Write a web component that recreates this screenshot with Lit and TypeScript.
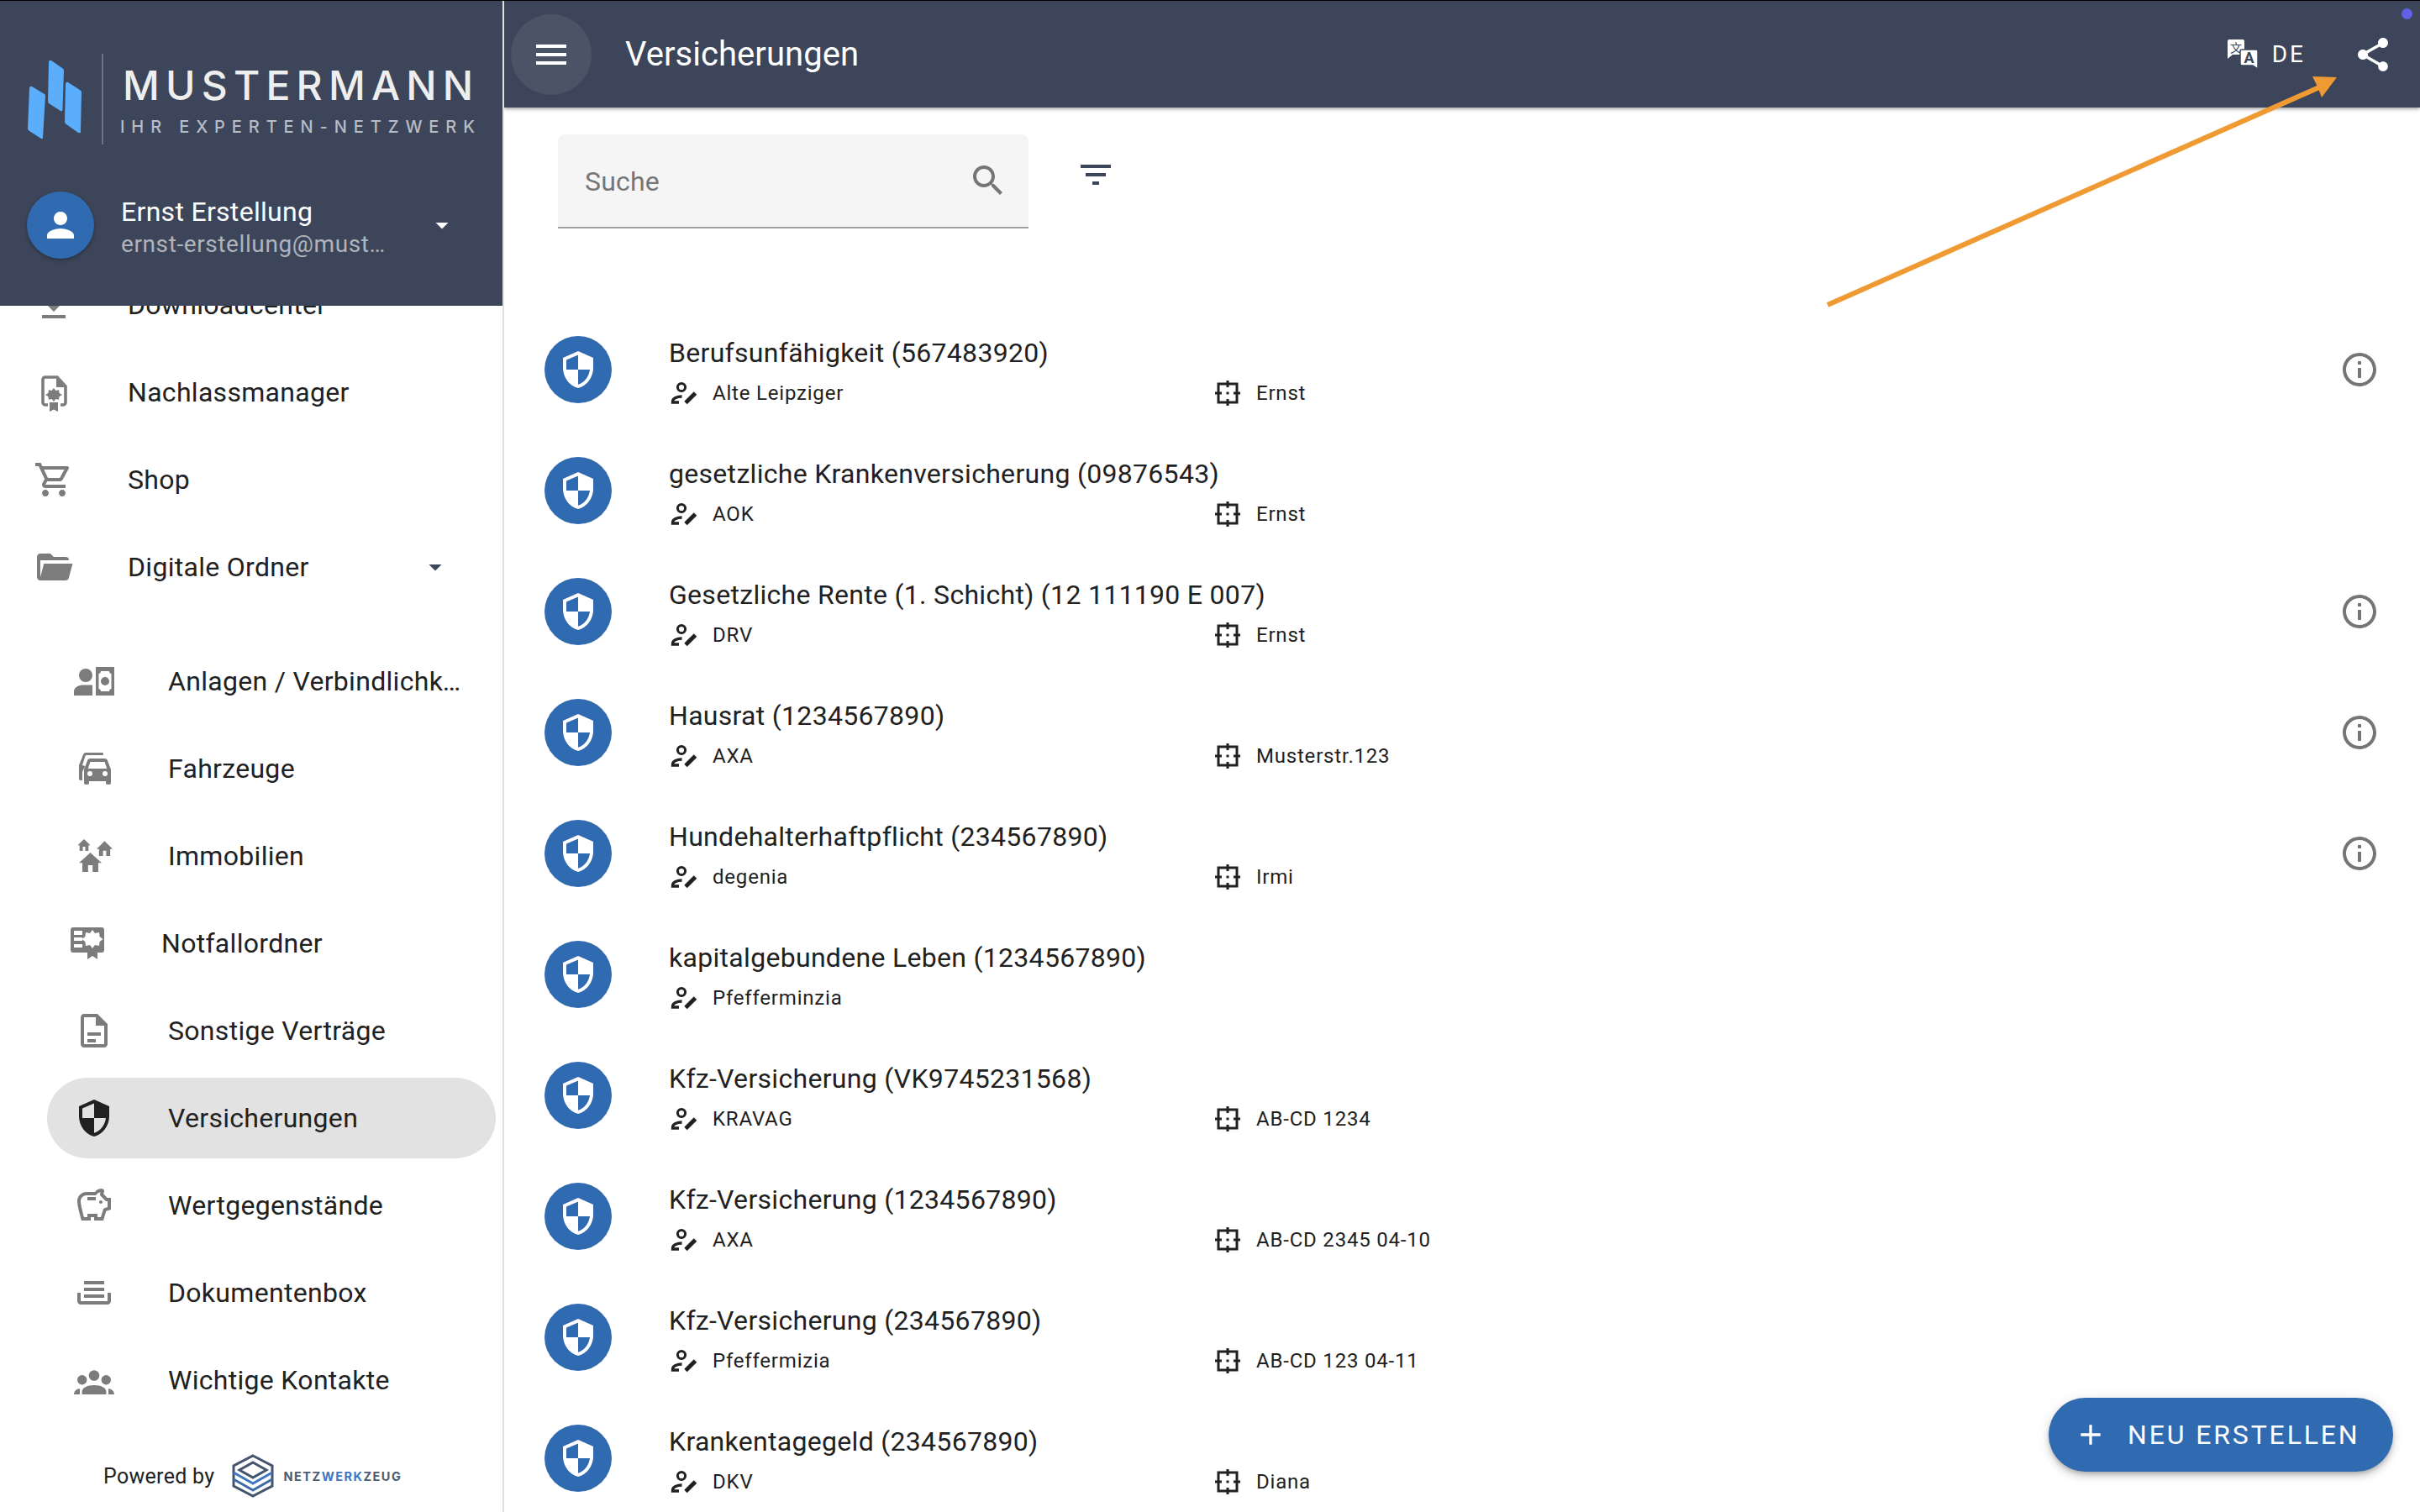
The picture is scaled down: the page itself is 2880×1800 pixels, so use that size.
import { LitElement, html, css, svg } from "lit";
import { customElement } from "lit/decorators.js";

const P = {
  download: "M19 9h-4V3H9v6H5l7 7 7-7zM5 18v2h14v-2H5z",
  cart: "M15.55 13c.75 0 1.41-.41 1.75-1.03l3.58-6.49c.37-.66-.11-1.48-.87-1.48H5.21l-.94-2H1v2h2l3.6 7.59-1.35 2.44C4.52 15.37 5.48 17 7 17h12v-2H7l1.1-2h7.45zM6.16 6h12.15l-2.76 5H8.53L6.16 6zM7 18c-1.1 0-1.99.9-1.99 2S5.9 22 7 22s2-.9 2-2-.9-2-2-2zm10 0c-1.1 0-1.99.9-1.99 2s.89 2 1.99 2 2-.9 2-2-.9-2-2-2z",
  folder: "M19 20H4C2.89 20 2 19.1 2 18V6C2 4.89 2.89 4 4 4H10L12 6H19A2 2 0 0 1 21 8H4V18L6.14 10H23.21L20.93 18.5C20.7 19.37 19.92 20 19 20Z",
  shield: "M12 1L3 5v6c0 5.55 3.84 10.74 9 12 5.16-1.26 9-6.45 9-12V5l-9-4zm0 10.99h7c-.53 4.12-3.28 7.79-7 8.94V12H5V6.3l7-3.11v8.8z",
  piggy: "M15 10c0-.55.45-1 1-1s1 .45 1 1-.45 1-1 1-1-.45-1-1zM8 9h5V7H8v2zm14-1.5v6.97l-2.82.94L17.5 21H12v-2h-2v2H4.5S2 12.54 2 9.5 4.46 4 7.5 4h5c.91-1.21 2.36-2 4-2 .83 0 1.5.67 1.5 1.5 0 .21-.04.4-.12.58-.14.32-.26.65-.31.99L19.83 7.5H22zm-2 2h-1l-3.5-3.5c0-.65.09-1.29.26-1.91C14.79 4.34 14 4.8 13.5 5.5L13 6H7.5C5.57 6 4 7.57 4 9.5c0 1.88 1.22 6.65 2.01 9.5H8v-2h6v2h2.01l1.55-5.15 2.44-.82V9.5z",
  box: "M6 5h12v2H6zM6 9h12v2H6zM6 13h12v2H6zM2 12h2v5h16v-5h2v5c0 1.1-.9 2-2 2H4c-1.1 0-2-.9-2-2z",
  doc: "M14 2H6c-1.1 0-2 .9-2 2v16c0 1.1.9 2 2 2h12c1.1 0 2-.9 2-2V8l-6-6zM18 20H6V4h7v5h5zM8 13h8v2H8zM8 17h5v2H8z",
  car: "M19.9 7c-.2-.6-.8-1-1.4-1h-9c-.6 0-1.2.4-1.4 1L6 12.5v8a1 1 0 001 1h1a1 1 0 001-1v-1h10v1a1 1 0 001 1h1a1 1 0 001-1v-8zM8.4 12l1.3-4h8.6l1.3 4zM9.5 16.5a1.5 1.5 0 110-3 1.5 1.5 0 010 3zm9 0a1.5 1.5 0 110-3 1.5 1.5 0 010 3zM16.5 2.5H7c-.6 0-1.2.4-1.4 1L3 10v8a1 1 0 001 1h1v-5l1.6-3.5-1.6-.5 1.8-5.5c.1-.4.4-.5.8-.5h9.9c-.1-.5-.2-1-.2-1.5z",
  person: "M12 12c2.21 0 4-1.79 4-4s-1.79-4-4-4-4 1.79-4 4 1.79 4 4 4zm0 2c-2.67 0-8 1.34-8 4v2h16v-2c0-2.66-5.33-4-8-4z",
  menu: "M3 18h18v-2H3v2zm0-5h18v-2H3v2zm0-7v2h18V6H3z",
  filter: "M10 18h4v-2h-4v2zM3 6v2h18V6H3zm3 7h12v-2H6v2z",
  search: "M15.5 14h-.79l-.28-.27C15.41 12.59 16 11.11 16 9.5 16 5.91 13.09 3 9.5 3S3 5.91 3 9.5 5.91 16 9.5 16c1.61 0 3.09-.59 4.23-1.57l.27.28v.79l5 4.99L20.49 19l-4.99-5zm-6 0C7.01 14 5 11.99 5 9.5S7.01 5 9.5 5 14 7.01 14 9.5 11.99 14 9.5 14z",
  share: "M18 16.08c-.76 0-1.44.3-1.96.77L8.91 12.7c.05-.23.09-.46.09-.7s-.04-.47-.09-.7l7.05-4.11c.54.5 1.25.81 2.04.81 1.66 0 3-1.34 3-3s-1.34-3-3-3-3 1.34-3 3c0 .24.04.47.09.7L8.04 9.81C7.5 9.31 6.79 9 6 9c-1.66 0-3 1.34-3 3s1.34 3 3 3c.79 0 1.5-.31 2.04-.81l7.12 4.16c-.05.21-.08.43-.08.65 0 1.61 1.31 2.92 2.92 2.92 1.61 0 2.92-1.31 2.92-2.92s-1.31-2.92-2.92-2.92z",
  info: "M11 7h2v2h-2zm0 4h2v6h-2zm1-9C6.48 2 2 6.48 2 12s4.48 10 10 10 10-4.48 10-10S17.52 2 12 2zm0 18c-4.41 0-8-3.59-8-8s3.59-8 8-8 8 3.59 8 8-3.59 8-8 8z",
  plus: "M19 13h-6v6h-2v-6H5v-2h6V5h2v6h6v2z",
  caret: "M7 10l5 5 5-5z",
};
const HOME = "M10 20v-6h4v6h5v-8h3L12 3 2 12h3v8z";

const ic = (d: string, cls = "") => html`<svg class="ic ${cls}" viewBox="0 0 24 24"><path d=${d} fill-rule="evenodd"></path></svg>`;

const certIcon = html`<svg class="ic" viewBox="0 0 48 48">
  <path d="M17 39h-3a3 3 0 0 1-3-3V9a3 3 0 0 1 3-3h14l10 11v19a3 3 0 0 1-3 3h-3" fill="none" stroke="currentColor" stroke-width="3.6"></path>
  <path d="M27 6l11 12H27z"></path>
  <path d="M24 19l2.4 3 3.6-.8.6 3.8 3.4 2-3.4 2-.6 3.8-3.6-.8-2.4 3-2.4-3-3.6.8-.6-3.8-3.4-2 3.4-2 .6-3.8 3.6.8z"></path>
  <path d="M19 36h10v11l-5-2.5-5 2.5z"></path>
</svg>`;
const assetsIcon = html`<svg class="ic" viewBox="0 0 48 48">
  <circle cx="14" cy="17" r="8"></circle>
  <path d="M0 41v-5c0-5 6-7.500 11-7.500h11V41z"></path>
  <path fill-rule="evenodd" d="M26 7h22v34H26zM32 12c0 2-1.500 3-2.500 3v18c1 0 2.500 1 2.500 3h10c0-2 1.500-3 2.500-3V15c-1 0-2.500-1-2.500-3zM37 19a5 5 0 1 1 0 10 5 5 0 0 1 0-10z"></path>
</svg>`;
const homesIcon = html`<svg class="ic" viewBox="0 0 48 48">
  <path d=${HOME} transform="translate(3 1.500) scale(.75 .82)"></path>
  <path d=${HOME} transform="translate(25.100 3.100) scale(.95 1.050)"></path>
  <path d=${HOME} transform="translate(3.300 16) scale(1.350)"></path>
</svg>`;
const emergencyIcon = html`<svg class="ic" viewBox="0 0 48 48">
  <path fill-rule="evenodd" d="M7 5h34a3 3 0 0 1 3 3v24a3 3 0 0 1-3 3H7a3 3 0 0 1-3-3V8a3 3 0 0 1 3-3zM8 9v5h10V9zM8 17v4h10v-4zM8 25v4h10v-4z"></path>
  <path fill="#fff" d="M30 8l3 4 5-1 .6 5 4 3-4 3-.6 5-5-1-3 4-3-4-5 1-.6-5-4-3 4-3 .6-5 5 1z"></path>
  <path d="M24 30l6 2 6-2v13l-6-4-6 4z"></path>
</svg>`;
const groupIcon = html`<svg class="ic" viewBox="0 0 48 48">
  <circle cx="24" cy="18.500" r="6.300"></circle>
  <circle cx="9.700" cy="23.700" r="5.700"></circle>
  <circle cx="38.300" cy="23.700" r="5.700"></circle>
  <path d="M9.600 41v-3c0-5 6-8 14.400-8s14.400 3 14.400 8v3z"></path>
  <path d="M0 41c0-3 2-6 7-7v7zM48 41c0-3-2-6-7-7v7z"></path>
</svg>`;

const NAV_TOP = [
  { icon: ic(P.download), label: "Downloadcenter" },
  { icon: certIcon, label: "Nachlassmanager" },
  { icon: ic(P.cart), label: "Shop" },
  { icon: ic(P.folder), label: "Digitale Ordner", caret: true },
];
const NAV_SUB = [
  { icon: assetsIcon, label: "Anlagen / Verbindlichkeiten" },
  { icon: ic(P.car), label: "Fahrzeuge" },
  { icon: homesIcon, label: "Immobilien" },
  { icon: emergencyIcon, label: "Notfallordner", shift: true },
  { icon: ic(P.doc), label: "Sonstige Verträge" },
  { icon: ic(P.shield), label: "Versicherungen", active: true },
  { icon: ic(P.piggy), label: "Wertgegenstände" },
  { icon: ic(P.box), label: "Dokumentenbox" },
  { icon: groupIcon, label: "Wichtige Kontakte" },
];
const ROWS: { t: string; a: string; b?: string; info?: boolean }[] = [
  { t: "Berufsunfähigkeit (567483920)", a: "Alte Leipziger", b: "Ernst", info: true },
  { t: "gesetzliche Krankenversicherung (09876543)", a: "AOK", b: "Ernst" },
  { t: "Gesetzliche Rente (1. Schicht) (12 111190 E 007)", a: "DRV", b: "Ernst", info: true },
  { t: "Hausrat (1234567890)", a: "AXA", b: "Musterstr.123", info: true },
  { t: "Hundehalterhaftpflicht (234567890)", a: "degenia", b: "Irmi", info: true },
  { t: "kapitalgebundene Leben (1234567890)", a: "Pfefferminzia" },
  { t: "Kfz-Versicherung (VK9745231568)", a: "KRAVAG", b: "AB-CD 1234" },
  { t: "Kfz-Versicherung (1234567890)", a: "AXA", b: "AB-CD 2345 04-10" },
  { t: "Kfz-Versicherung (234567890)", a: "Pfeffermizia", b: "AB-CD 123 04-11" },
  { t: "Krankentagegeld (234567890)", a: "DKV", b: "Diana" },
];

@customElement("app-root")
export class AppRoot extends LitElement {
  static styles = css`
    :host { display: block; width: 2880px; height: 1800px; overflow: hidden; font-family: Roboto, "Liberation Sans", sans-serif; color: #212121; background: #fff; position: relative; }
    .app { display: flex; width: 2880px; height: 1800px; box-sizing: border-box; border-top: 1px solid #000; }
    .ic { width: 48px; height: 48px; fill: currentColor; flex: none; display: block; }
    .ic.small { width: 36px; height: 36px; }

    .side { width: 600px; flex: none; box-sizing: border-box; border-right: 2px solid #e0e0e0; display: flex; flex-direction: column; overflow: hidden; }
    .brandbox { height: 363px; flex: none; background: #3c4559; color: #fff; box-sizing: border-box; padding: 63px 0 0 32px; position: relative; z-index: 2; }
    .brand { display: flex; height: 108px; }
    .bars { width: 66px; height: 96px; flex: none; margin-top: 8px; fill: #5aaefc; }
    .rule { width: 2px; height: 108px; background: #6f7585; margin: 0 23px 0 23px; flex: none; }
    .brandtext { display: flex; flex-direction: column; }
    .bname { font-family: Inter, sans-serif; font-weight: 500; font-size: 48px; line-height: 50px; letter-spacing: 7.2px; color: #eeeeee; margin-top: 13px; white-space: nowrap; }
    .bsub { font-family: Inter, sans-serif; font-weight: 500; font-size: 20px; line-height: 24px; letter-spacing: 7.900px; color: #b9bcc4; margin-top: 12px; margin-left: -3px; white-space: nowrap; }
    .account { display: flex; align-items: center; margin-top: 56px; height: 80px; }
    .avatar { width: 80px; height: 80px; border-radius: 50%; background: #306ab0; display: flex; align-items: center; justify-content: center; box-shadow: 0 2px 4px rgba(0,0,0,.3); flex: none; }
    .who { margin: 6px 0 0 32px; width: 316px; flex: none; }
    .who div { overflow: hidden; white-space: nowrap; text-overflow: ellipsis; }
    .uname { font-size: 32px; line-height: 40px; letter-spacing: .3px; }
    .umail { font-size: 28px; line-height: 38px; letter-spacing: .6px; color: rgba(255,255,255,.6); }
    .acaret { margin-left: 48px; }

    .navwrap { flex: 1; min-height: 0; overflow: hidden; }
    .nav { margin-top: -53px; }
    .subnav { margin-top: 32px; }
    .item { height: 104px; display: flex; align-items: center; padding-left: 40px; font-size: 32px; letter-spacing: .3px; white-space: nowrap; box-sizing: border-box; }
    .item .ic { color: #7c7c7c; }
    .item .lbl { margin-left: 64px; flex: 1; min-width: 0; overflow: hidden; text-overflow: ellipsis; padding-right: 46px; }
    .item .ic.ncaret { color: #3c4559; margin-right: 62px; }
    .sub { padding-left: 88px; }
    .shift { padding-left: 80px; }
    .sel { position: relative; z-index: 0; }
    .sel::before { content: ""; position: absolute; z-index: -1; left: 56px; width: 534px; top: 4px; height: 96px; border-radius: 48px; background: #e2e2e2; }
    .item.sel .ic { color: #212121; }
    .powered { height: 106px; box-sizing: border-box; padding: 20px 0 0 123px; display: flex; align-items: center; font-size: 25px; letter-spacing: .3px; }
    .hex { width: 50px; height: 52px; margin-left: 21px; flex: none; }
    .nwz { margin-left: 11px; font-family: Inter, sans-serif; font-weight: 700; font-size: 14.500px; letter-spacing: 1.5px; color: #4c5b74; }
    .nwz b { color: #3f76c0; font-weight: 700; }

    .main { flex: 1; min-width: 0; display: flex; flex-direction: column; overflow: hidden; }
    .top { height: 127px; flex: none; background: #3c4559; color: #fff; display: flex; align-items: center; box-shadow: 0 2px 4px rgba(0,0,0,.35); position: relative; z-index: 1; }
    .menu { width: 96px; height: 96px; border-radius: 50%; margin-left: 8px; background: rgba(255,255,255,.08); display: flex; align-items: center; justify-content: center; }
    .title { font-size: 40px; letter-spacing: .05px; margin-left: 40px; flex: 1; }
    .trans { width: 36px; height: 36px; flex: none; overflow: visible; }
    .lang { font-size: 28px; letter-spacing: 3px; margin-left: 17px; margin-right: 56px; }
    .share { margin-right: 32px; }

    .tools { display: flex; padding: 32px 0 0 64px; }
    .field { width: 560px; height: 112px; box-sizing: border-box; background: #f5f5f5; border-bottom: 2px solid #a0a0a0; border-radius: 8px 8px 0 0; display: flex; align-items: center; padding: 2px 24px 0 32px; font-size: 32px; letter-spacing: .2px; color: #757575; }
    .field span { flex: 1; }
    .field .ic { color: #757575; margin-top: -2px; }
    .filter { margin: 24px 0 0 56px; color: #3c4559; }

    .list { margin-top: 96px; }
    .row { height: 144px; display: flex; align-items: center; padding: 0 48px 0 48px; box-sizing: border-box; }
    .disc { width: 80px; height: 80px; border-radius: 50%; background: #306ab0; color: #fff; display: flex; align-items: center; justify-content: center; flex: none; }
    .body { margin-left: 68px; flex: 1; padding-top: 8px; }
    .rtitle { font-size: 32px; line-height: 48px; letter-spacing: .3px; white-space: nowrap; }
    .meta { display: flex; height: 48px; align-items: center; font-size: 24px; letter-spacing: .8px; }
    .mcol { display: flex; align-items: center; }
    .mfirst { width: 648px; }
    .mi1 { width: 32px; height: 28px; flex: none; margin-right: 18px; margin-left: 2px; }
    .mi2 { width: 30px; height: 30px; flex: none; margin-right: 19px; margin-left: 2px; }
    .mi1, .mi2 { fill: none; stroke: #212121; }
    .info { color: #757575; }

    .fab { position: absolute; right: 32px; bottom: 48px; width: 410px; height: 88px; box-sizing: border-box; border-radius: 44px; background: #306ab0; color: #fff; display: flex; align-items: center; padding-left: 30px; font-size: 32px; letter-spacing: 2.860px; white-space: nowrap; box-shadow: 0 3px 5px -1px rgba(0,0,0,.2), 0 6px 10px 0 rgba(0,0,0,.14), 0 1px 18px 0 rgba(0,0,0,.08); z-index: 3; }
    .fab .ic { width: 40px; height: 40px; margin-right: 24px; }
    .dot { position: absolute; left: 2858px; top: 10px; width: 13px; height: 13px; border-radius: 50%; background: #6161e8; z-index: 4; }
    .arrow { position: absolute; left: 0; top: 0; width: 2880px; height: 1800px; pointer-events: none; z-index: 4; }
  `;

  private meta(r: (typeof ROWS)[number]) {
    return html`<div class="meta">
      <div class="mcol mfirst">
        <svg class="mi1" viewBox="0 0 32 28"><circle cx="13" cy="7" r="4.600" stroke-width="3"></circle><path d="M2.500 26.500v-2.500c0-4 5.500-6 11-6M1 25h9" stroke-width="3.300"></path><path d="M18 25.500L29.500 14" stroke-width="5"></path></svg>
        <span>${r.a}</span>
      </div>
      ${r.b ? html`<div class="mcol"><svg class="mi2" viewBox="0 0 30 30"><rect x="4" y="4" width="22" height="22" stroke-width="3"></rect><path d="M15 0v8M15 22v8M0 15h8M22 15h8M15 13.500v3" stroke-width="3"></path></svg><span>${r.b}</span></div>` : ""}
    </div>`;
  }

  render() {
    return html`<div class="app">
      <aside class="side">
        <div class="brandbox">
          <div class="brand">
            <svg class="bars" viewBox="0 0 66 96">
              <path d="M6 31l15 9q1 1 1 2l-3 50q-.500 2-2 1L3 84q-2-1-2-3L3 33q.500-3 3-2z"></path>
              <path d="M29 0l13 9q2 1 2 3l-1.500 46q0 3-2.500 2L26 51q-1-1-1-3L26 2q.500-3 3-2z"></path>
              <path d="M49 26l14 9q2 1 2 3l-1 47q0 2-3 1L47 76q-2-1-2-3L46 28q.500-3 3-2z"></path>
            </svg>
            <div class="rule"></div>
            <div class="brandtext"><div class="bname">MUSTERMANN</div><div class="bsub">IHR EXPERTEN-NETZWERK</div></div>
          </div>
          <div class="account">
            <div class="avatar">${ic(P.person)}</div>
            <div class="who"><div class="uname">Ernst Erstellung</div><div class="umail">ernst-erstellung@mustermann.de</div></div>
            <div class="acaret">${ic(P.caret, "small")}</div>
          </div>
        </div>
        <div class="navwrap">
          <div class="nav">
            ${NAV_TOP.map((n) => html`<div class="item">${n.icon}<span class="lbl">${n.label}</span>${n.caret ? ic(P.caret, "small ncaret") : ""}</div>`)}
            <div class="subnav">
              ${NAV_SUB.map((n) => html`<div class="item ${n.shift ? "shift" : "sub"} ${n.active ? "sel" : ""}">${n.icon}<span class="lbl">${n.label}</span></div>`)}
            </div>
          </div>
        </div>
        <div class="powered">
          <span>Powered by</span>
          <svg class="hex" viewBox="0 0 50 52" fill="none" stroke-width="3">
            <path d="M25 2l23 12v24L25 50 2 38V14z" stroke="#44546e"></path>
            <path d="M25 10l16 9-16 9-16-9z" stroke="#44546e"></path>
            <path d="M2 22l23 13 23-13" stroke="#3f76c0"></path>
            <path d="M2 30l23 13 23-13" stroke="#3f6aa8"></path>
          </svg>
          <span class="nwz">NETZ<b>WERK</b>ZEUG</span>
        </div>
      </aside>
      <main class="main">
        <header class="top">
          <div class="menu">${ic(P.menu)}</div>
          <div class="title">Versicherungen</div>
          <svg class="trans" viewBox="0 0 36 36">
            <path fill="#fff" d="M2 0h16a2 2 0 0 1 2 2v16H6l-6 5V2a2 2 0 0 1 2-2z"></path>
            <text x="10" y="15" font-size="14" text-anchor="middle" fill="#3c4559" font-family="Noto Sans CJK SC, sans-serif">文</text>
            <path fill="#fff" stroke="#3c4559" stroke-width="1.500" d="M17 12h17a2 2 0 0 1 2 2v21l-6-4H17a2 2 0 0 1-2-2V14a2 2 0 0 1 2-2z"></path>
            <text x="25.500" y="28" font-size="18" font-weight="700" text-anchor="middle" fill="#3c4559" font-family="Roboto, sans-serif">A</text>
          </svg>
          <div class="lang">DE</div>
          <div class="share">${ic(P.share)}</div>
        </header>
        <div class="tools">
          <div class="field"><span>Suche</span>${ic(P.search)}</div>
          ${ic(P.filter, "filter")}
        </div>
        <div class="list">
          ${ROWS.map((r) => html`<div class="row">
            <div class="disc">${ic(P.shield)}</div>
            <div class="body"><div class="rtitle">${r.t}</div>${this.meta(r)}</div>
            ${r.info ? ic(P.info, "info") : ""}
          </div>`)}
        </div>
      </main>
      <div class="fab">${ic(P.plus)}<span>NEU ERSTELLEN</span></div>
      <div class="dot"></div>
      <svg class="arrow" viewBox="0 0 2880 1800">
        ${svg`<path d="M2175 363L2760 104" stroke="#f09a33" stroke-width="6" fill="none"></path><path d="M2781 92L2752 91 2758 103 2763 116z" fill="#f09a33"></path>`}
      </svg>
    </div>`;
  }
}
